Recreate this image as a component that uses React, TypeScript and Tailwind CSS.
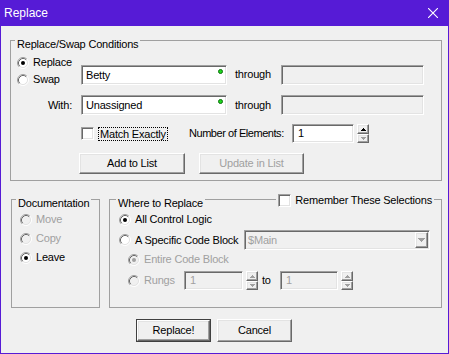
import clsx from "clsx";

const sunken =
  "border border-t-[#a0a0a0] border-l-[#a0a0a0] border-b-white border-r-white shadow-[inset_1px_1px_0_#696969,inset_-1px_-1px_0_#e3e3e3]";
const raised =
  "border border-t-white border-l-white border-b-[#696969] border-r-[#696969] shadow-[inset_-1px_-1px_0_#a0a0a0,inset_1px_1px_0_#e3e3e3]";
const line = "h-px bg-[#a0a0a0] mt-[11px]";

function RadioMark({ checked, disabled }: { checked?: boolean; disabled?: boolean }) {
  return (
    <svg width="12" height="12" viewBox="0 0 12 12" className="shrink-0">
      <circle cx="6" cy="6" r="4.5" fill={disabled ? "#f0f0f0" : "#fff"} />
      <path d="M2.11 9.89A5.5 5.5 0 0 1 9.89 2.11" fill="none" stroke="#a0a0a0" />
      <path d="M9.89 2.11A5.5 5.5 0 0 1 2.11 9.89" fill="none" stroke="#fff" />
      <path d="M2.82 9.18A4.5 4.5 0 0 1 9.18 2.82" fill="none" stroke="#696969" />
      <path d="M9.18 2.82A4.5 4.5 0 0 1 2.82 9.18" fill="none" stroke="#e3e3e3" />
      {checked && <circle cx="6" cy="6" r="2" fill={disabled ? "#a0a0a0" : "#000"} />}
    </svg>
  );
}

function Radio({
  label,
  checked,
  disabled,
}: {
  label: string;
  checked?: boolean;
  disabled?: boolean;
}) {
  return (
    <div className="flex items-center gap-[4px] h-[13px]">
      <RadioMark checked={checked} disabled={disabled} />
      <span className={clsx("whitespace-nowrap", disabled && "text-[#a0a0a0]")}>{label}</span>
    </div>
  );
}

function Check() {
  return <div className={clsx(sunken, "w-[13px] h-[13px] bg-white shrink-0")} />;
}

function Field({
  value,
  disabled,
  dot,
  className,
}: {
  value?: string;
  disabled?: boolean;
  dot?: boolean;
  className?: string;
}) {
  return (
    <div
      className={clsx(
        sunken,
        "relative flex items-center pl-[4px] shrink-0",
        disabled ? "bg-[#f0f0f0] text-[#a0a0a0]" : "bg-white",
        className
      )}
    >
      {value}
      {dot && (
        <div className="absolute top-[3px] right-[3px] w-[5px] h-[5px] rounded-full bg-[#1cd81c] border border-[#0a6e0a]" />
      )}
    </div>
  );
}

function Arrow({ up, enabled }: { up?: boolean; enabled?: boolean }) {
  return (
    <svg width="5" height="3" viewBox="0 0 5 3" shapeRendering="crispEdges">
      <polygon
        points={up ? "0,3 2.5,0 5,3" : "0,0 5,0 2.5,3"}
        fill={enabled ? "#000" : "#a0a0a0"}
      />
    </svg>
  );
}

function Spin({ upEnabled }: { upEnabled?: boolean }) {
  return (
    <div className="flex flex-col w-[12px] h-[19px] ml-[3px] shrink-0">
      <div className={clsx(raised, "h-[10px] bg-[#f0f0f0] flex items-center justify-center")}>
        <Arrow up enabled={upEnabled} />
      </div>
      <div className={clsx(raised, "h-[9px] bg-[#f0f0f0] flex items-center justify-center")}>
        <Arrow />
      </div>
    </div>
  );
}

function Btn({
  label,
  disabled,
  isDefault,
  className,
}: {
  label: string;
  disabled?: boolean;
  isDefault?: boolean;
  className?: string;
}) {
  const face = (
    <div
      className={clsx(
        raised,
        "w-full h-full bg-[#f0f0f0] flex items-center justify-center",
        disabled && "text-[#a0a0a0]"
      )}
    >
      {label}
    </div>
  );
  return (
    <div className={clsx("shrink-0", isDefault && "border border-[#404040]", className)}>{face}</div>
  );
}

export default function App() {
  return (
    <div className="w-[449px] h-[354px] bg-[#561bd6] flex flex-col font-['Liberation_Sans',Arial,sans-serif] text-[11px] leading-[13px] tracking-[-0.2px] text-black">
      <div className="h-[26px] shrink-0 flex items-center justify-between pl-[4px] pr-[11px] text-white text-[12px] tracking-normal">
        <span>Replace</span>
        <svg width="10" height="10" viewBox="0 0 10 10">
          <path d="M0 0L10 10M10 0L0 10" stroke="#fff" strokeWidth="1.1" />
        </svg>
      </div>

      <div className="flex-1 mx-[1px] mb-[1px] bg-[#f0f0f0] flex flex-col">
        <fieldset className="mt-[3px] ml-[9px] w-[432px] h-[152px] min-w-0 border border-[#a0a0a0] p-0">
          <legend className="ml-[4px] px-[2px] pt-[9px]">Replace/Swap Conditions</legend>

          <div className="mt-[5px] flex h-[30px]">
            <div className="w-[70px] pl-[6px] flex flex-col gap-[4px] shrink-0">
              <Radio label="Replace" checked />
              <Radio label="Swap" />
            </div>
            <Field className="mt-[9px] w-[146px] h-[20px]" value="Betty" dot />
            <div className="w-[54px] pl-[8px] mt-[12px] shrink-0">through</div>
            <Field className="mt-[9px] w-[143px] h-[20px]" disabled />
          </div>

          <div className="mt-[9px] flex h-[20px] items-center">
            <div className="w-[70px] pr-[9px] text-right shrink-0">With:</div>
            <Field className="w-[146px] h-[20px]" value="Unassigned" dot />
            <div className="w-[54px] pl-[8px] shrink-0">through</div>
            <Field className="w-[143px] h-[20px]" disabled />
          </div>

          <div className="mt-[9px] flex h-[19px] items-center">
            <div className="w-[70px] shrink-0" />
            <div className="w-[108px] flex items-center gap-[4px] shrink-0">
              <Check />
              <span className="border border-dotted border-black px-[1px] leading-[12px] whitespace-nowrap">
                Match Exactly
              </span>
            </div>
            <div className="w-[103px] whitespace-nowrap tracking-[-0.45px] shrink-0">Number of Elements:</div>
            <Field className="w-[62px] h-[19px] !pl-[5px]" value="1" />
            <Spin upEnabled />
          </div>

          <div className="mt-[10px] flex h-[21px]">
            <Btn className="ml-[68px] w-[106px]" label="Add to List" />
            <Btn className="ml-[14px] w-[105px]" label="Update in List" disabled />
          </div>
        </fieldset>

        <div className="mt-[7px] flex">
          <fieldset className="ml-[10px] w-[89px] h-[120px] min-w-0 border border-[#a0a0a0] p-0">
            <legend className="ml-[4px] px-[2px] pt-[9px]">Documentation</legend>
            <div className="mt-[3px] pl-[8px] flex flex-col gap-[6px]">
              <Radio label="Move" disabled />
              <Radio label="Copy" disabled />
              <Radio label="Leave" checked />
            </div>
          </fieldset>

          <fieldset className="ml-[9px] w-[333px] h-[120px] min-w-0 border border-[#a0a0a0] p-0">
            <legend className="w-full flex p-0">
              <div className={clsx(line, "w-[6px]")} />
              <span className="px-[2px] pt-[9px] whitespace-nowrap">Where to Replace</span>
              <div className={clsx(line, "flex-1")} />
              <div className="flex items-start gap-[4px] px-[2px] pt-[6px]">
                <Check />
                <span className="whitespace-nowrap">Remember These Selections</span>
              </div>
              <div className={clsx(line, "w-[7px]")} />
            </legend>

            <div className="mt-[3px] pl-[9px]">
              <Radio label="All Control Logic" checked />
            </div>

            <div className="mt-[4px] pl-[9px] flex items-center h-[20px]">
              <div className="w-[125px] shrink-0">
                <Radio label="A Specific Code Block" />
              </div>
              <div
                className={clsx(
                  sunken,
                  "w-[186px] h-[20px] bg-[#f0f0f0] flex items-center justify-between pl-[3px] pr-px text-[#a0a0a0]"
                )}
              >
                <span>$Main</span>
                <div className={clsx(raised, "w-[13px] h-[16px] flex items-center justify-center")}>
                  <svg width="7" height="4" viewBox="0 0 7 4" shapeRendering="crispEdges">
                    <polygon points="0,0 7,0 3.5,4" fill="#a0a0a0" />
                  </svg>
                </div>
              </div>
            </div>

            <div className="mt-[3px] pl-[18px]">
              <Radio label="Entire Code Block" checked disabled />
            </div>

            <div className="mt-[5px] pl-[18px] flex items-center h-[19px]">
              <div className="w-[56px] shrink-0">
                <Radio label="Rungs" disabled />
              </div>
              <Field className="w-[59px] h-[19px] !pl-[5px]" value="1" disabled />
              <Spin />
              <div className="w-[22px] pl-[4px] shrink-0">to</div>
              <Field className="w-[58px] h-[19px] !pl-[5px]" value="1" disabled />
              <Spin />
            </div>
          </fieldset>
        </div>

        <div className="mt-[11px] flex">
          <Btn className="ml-[135px] w-[75px] h-[23px]" label="Replace!" isDefault />
          <Btn className="ml-[6px] w-[75px] h-[23px]" label="Cancel" />
        </div>
      </div>
    </div>
  );
}
